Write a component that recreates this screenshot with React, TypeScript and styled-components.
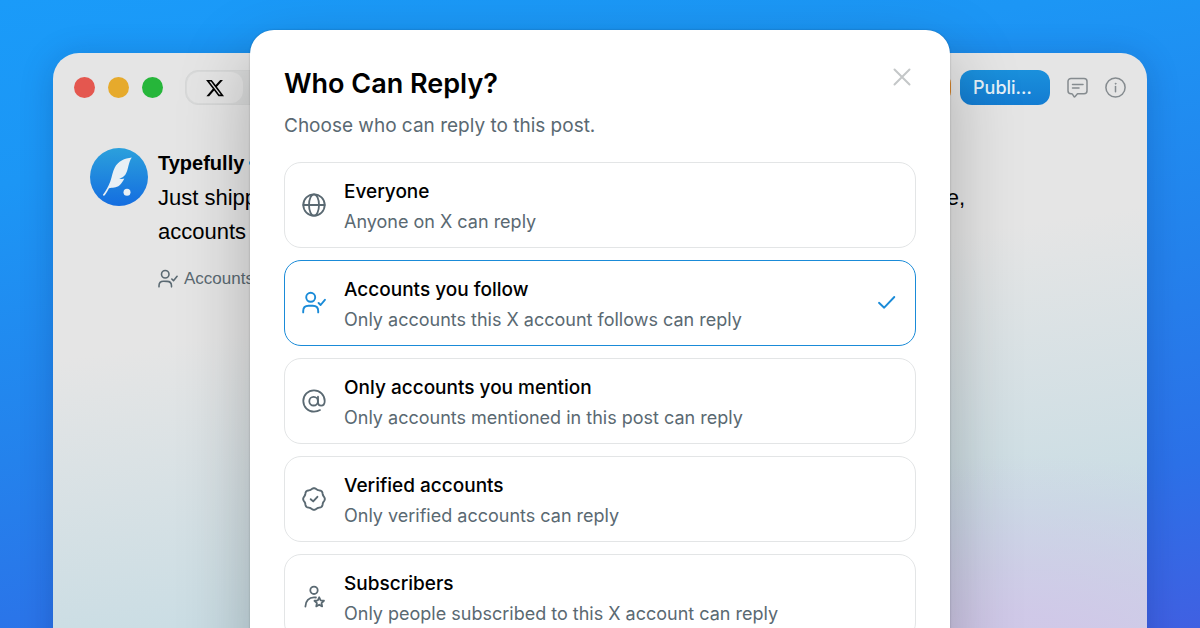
import React, { useState } from "react";
import styled, { createGlobalStyle, css } from "styled-components";

const sans = `Inter, "Liberation Sans", sans-serif`;
const helvetica = `"Liberation Sans", Arial, sans-serif`;
const blue = "#1a8bd8";
const slate = "#5a6972";

const GlobalStyle = createGlobalStyle`
  *, *::before, *::after { box-sizing: border-box; }
  body { margin: 0; font-family: ${sans}; color: #000; }
  button { font: inherit; border: 0; background: none; padding: 0; cursor: pointer; }
  h1, h2, p { margin: 0; }
`;

const Stage = styled.div`
  position: relative;
  height: 100vh;
  overflow: hidden;
  padding: 53px 53px 0;
  background: linear-gradient(170deg, #1a9bf9 0%, #1c96f5 22%, #2482ec 55%, #2c71e8 80%, #4060e2 100%);
`;

const AppWindow = styled.main`
  height: 100%;
  min-height: 700px;
  border-radius: 26px;
  background:
    radial-gradient(ellipse 460px 200px at 88% 86%, rgba(208, 200, 232, 0.95) 20%, rgba(208, 200, 232, 0) 100%),
    linear-gradient(172deg, #e5e5e5 0%, #e5e5e5 36%, #cadde4 70%, #c9d3e6 100%);
  box-shadow: 0 4px 34px rgba(0, 20, 80, 0.2);
`;

const TitleBar = styled.header`
  display: flex;
  align-items: center;
  height: 69px;
  padding: 0 21px;
`;

const Lights = styled.div`
  display: flex;
  gap: 13px;
  margin-right: 22px;
`;

const Light = styled.span<{ $color: string }>`
  width: 21px;
  height: 21px;
  border-radius: 50%;
  background: ${(p) => p.$color};
`;

const Segments = styled.div`
  display: flex;
  height: 35px;
  padding: 1px;
  border: 1px solid #d6d7d7;
  border-radius: 13px;
  background: #d9dada;
`;

const Segment = styled.button<{ $active?: boolean }>`
  display: grid;
  place-items: center;
  width: 56px;
  border-radius: 12px;
  background: ${(p) => (p.$active ? "#e4e4e4" : "transparent")};
`;

const Actions = styled.div`
  display: flex;
  align-items: center;
  gap: 17px;
  margin-left: auto;
`;

const ActionPair = styled.div`
  display: flex;
  align-items: center;
  gap: 9px;
`;

const StreakBadge = styled.span`
  width: 34px;
  height: 25px;
  border-radius: 8px;
  background: #e08a2c;
`;

const PublishButton = styled.button`
  width: 90px;
  height: 35px;
  padding: 0 13px;
  border-radius: 12px;
  text-align: left;
  font-size: 18px;
  font-weight: 500;
  color: #e6f1f8;
  background: linear-gradient(#1a90dc, #137cd2);
`;

const IconButton = styled.button`
  display: grid;
  place-items: center;
  width: 21px;
  height: 21px;
  color: #858b8f;
`;

const Post = styled.article`
  display: flex;
  gap: 10px;
  max-width: 940px;
  padding: 26px 21px 0 37px;
  font-family: ${helvetica};
`;

const PostBody = styled.div`
  flex: 1;
  min-width: 0;
`;

const Author = styled.h2`
  display: flex;
  align-items: center;
  gap: 4px;
  font-size: 20px;
  line-height: 30px;
`;

const PostText = styled.p`
  margin-top: 3px;
  font-size: 22px;
  line-height: 34px;
`;

const ReplyScope = styled.p`
  display: flex;
  align-items: center;
  gap: 6px;
  margin-top: 20px;
  font-size: 17px;
  line-height: 20px;
  color: ${slate};
`;

const Overlay = styled.div`
  position: absolute;
  inset: 0;
  display: flex;
  justify-content: center;
  align-items: flex-start;
  padding: 30px 24px 0;
`;

const Dialog = styled.section`
  width: 100%;
  max-width: 700px;
  padding: 34px;
  border-radius: 24px;
  background: #fff;
  box-shadow: 0 0 2px rgba(0, 0, 0, 0.25), 0 28px 70px rgba(0, 0, 0, 0.25);
`;

const DialogHeader = styled.div`
  display: flex;
  justify-content: space-between;
  align-items: flex-start;
  margin-bottom: 21px;
`;

const Title = styled.h1`
  font-size: 27px;
  font-weight: 600;
  line-height: 40px;
`;

const Subtitle = styled.p`
  margin-top: 7px;
  font-size: 19px;
  line-height: 30px;
  color: ${slate};
`;

const CloseButton = styled.button`
  display: grid;
  place-items: center;
  width: 28px;
  height: 26px;
  color: #c4c7c8;
`;

const Options = styled.fieldset`
  display: grid;
  gap: 12px;
  margin: 0;
  padding: 0;
  border: 0;
`;

const Option = styled.label<{ $selected: boolean }>`
  position: relative;
  display: flex;
  align-items: center;
  gap: 18px;
  height: 86px;
  padding: 0 18px 0 17px;
  border: 1px solid #e3e5e6;
  border-radius: 17px;
  cursor: pointer;
  color: ${slate};
  ${(p) =>
    p.$selected &&
    css`
      border-color: ${blue};
      color: ${blue};
    `}
`;

const Radio = styled.input`
  position: absolute;
  inset: 0;
  margin: 0;
  opacity: 0;
  cursor: pointer;
`;

const OptionText = styled.span`
  flex: 1;
  display: grid;
  padding-top: 3px;
  line-height: 30px;
`;

const OptionName = styled.span`
  font-size: 19px;
  font-weight: 500;
  color: #000;
`;

const OptionHint = styled.span`
  font-size: 18px;
  color: ${slate};
`;

const Svg = styled.svg.attrs({
  fill: "none",
  stroke: "currentColor",
  strokeLinecap: "round",
  strokeLinejoin: "round",
  "aria-hidden": true,
})`
  flex: none;
  display: block;
`;

const GlobeIcon = () => (
  <Svg width="24" height="24" viewBox="0 0 24 24" strokeWidth="1.8">
    <circle cx="12" cy="12" r="10.7" />
    <ellipse cx="12" cy="12" rx="5" ry="10.7" />
    <path d="M1.3 12h21.4" />
  </Svg>
);

const UserCheckIcon = ({ size = 24 }: { size?: number }) => (
  <Svg width={size} height={size} viewBox="0 0 24 24" strokeWidth="1.9">
    <circle cx="8.7" cy="6.3" r="4.500" />
    <path d="M1.2 21.4v-1.400c0-3.200 2.200-5.200 5.400-5.200h4.200c3.200 0 5.400 2 5.400 5.200v1.400M16.600 12l2 2 4.300-5.200" />
  </Svg>
);

const AtIcon = () => (
  <Svg width="24" height="24" viewBox="0 0 24 24" strokeWidth="1.800">
    <circle cx="11.600" cy="12.200" r="4.300" />
    <path d="M16 7.700v5.700c0 2 1.200 3.200 3.100 3.200 2.300 0 3.600-2 3.600-4.700A10.700 10.700 0 1 0 12 22.700c2.300 0 4.300-.5 6-1.600" />
  </Svg>
);

const sealPath = (() => {
  const points = Array.from({ length: 96 }, (_, i) => {
    const a = (i / 96) * Math.PI * 2;
    const r = 10.3 + 0.55 * Math.cos(8 * a);
    return `${(12 + r * Math.cos(a)).toFixed(2)} ${(12 + r * Math.sin(a)).toFixed(2)}`;
  });
  return `M${points.join("L")}Z`;
})();

const VerifiedIcon = () => (
  <Svg width="24" height="24" viewBox="0 0 24 24" strokeWidth="1.900">
    <path d={sealPath} />
    <path d="M8.700 12.200l2.500 2.200 4.200-4.600" />
  </Svg>
);

const starPath = (() => {
  const points = Array.from({ length: 10 }, (_, i) => {
    const a = (i / 10) * Math.PI * 2 - Math.PI / 2;
    const r = i % 2 ? 2.4 : 5;
    return `${(17.2 + r * Math.cos(a)).toFixed(2)} ${(17.3 + r * Math.sin(a)).toFixed(2)}`;
  });
  return `M${points.join("L")}Z`;
})();

const UserStarIcon = () => (
  <Svg width="24" height="24" viewBox="0 0 24 24" strokeWidth="1.800">
    <circle cx="12" cy="5.300" r="3.700" />
    <path d="M3.400 21.500c0-5.400 3.600-9.200 8.600-9.200.7 0 1.300.1 1.900.200" />
    <path d={starPath} />
  </Svg>
);

const CheckIcon = () => (
  <Svg width="20" height="20" viewBox="0 0 20 20" strokeWidth="1.900">
    <path d="M2 9.800l5.200 4.900L17.300 4" />
  </Svg>
);

const CloseIcon = () => (
  <Svg width="18" height="18" viewBox="0 0 18 18" strokeWidth="2">
    <path d="M1.500 1.500l15 15M16.500 1.500l-15 15" />
  </Svg>
);

const CommentIcon = () => (
  <Svg width="21" height="21" viewBox="0 0 21 21" strokeWidth="1.500">
    <path d="M4 1.400h13a3 3 0 0 1 3 3v9.400a3 3 0 0 1-3 3h-6.500l-2.600 2.900a.6.6 0 0 1-.9 0l-1.600-2.500a1 1 0 0 0-.9-.4H4a3 3 0 0 1-3-3V4.400a3 3 0 0 1 3-3zM5.500 7.500h10.500M5.500 11h6.500" />
  </Svg>
);

const InfoIcon = () => (
  <Svg width="21" height="21" viewBox="0 0 21 21" strokeWidth="1.500">
    <circle cx="10.500" cy="10.500" r="9.600" />
    <path d="M10.500 9.500v5.200" />
    <circle cx="10.500" cy="6.700" r=".5" fill="currentColor" strokeWidth=".8" />
  </Svg>
);

const XLogo = () => (
  <svg width="20" height="20" viewBox="0 0 24 24" aria-hidden="true">
    <path d="M18.244 2.250h3.308l-7.227 8.260 8.502 11.240H16.170l-5.214-6.817L4.990 21.750H1.680l7.730-8.835L1.254 2.250H8.080l4.713 6.231zm-1.161 17.520h1.833L7.084 4.126H5.117z" />
  </svg>
);

const Avatar = styled.svg`
  flex: none;
  width: 58px;
  height: 58px;
`;

const FeatherAvatar = () => (
  <Avatar viewBox="0 0 58 58" role="img" aria-label="Typefully">
    <defs>
      <linearGradient id="sky" x1="0" y1="0" x2="0" y2="1">
        <stop offset="0" stopColor="#2ba0dc" />
        <stop offset="1" stopColor="#146de0" />
      </linearGradient>
    </defs>
    <circle cx="29" cy="29" r="29" fill="url(#sky)" />
    <path
      fill="#e9f0f5"
      d="M41.800 9.600C34.500 10.300 28 13.500 24.800 19.500c-2.200 4.200-2.800 9.300-4.600 14.300-1.800 4.800-4.500 9.200-7.400 13.300.5.8 1.400.9 2 .2 1.700-2.400 3-4.800 4.200-7.100 3.300-.6 7.300-.2 10.600-2.900 1.700-1.500 3.500-4 4.700-6.700-1.700.5-3.400.5-5.200-.1 2.600-.6 4.800-1.700 6.200-3.700 3.300-5 2.700-12 6.500-17.200z"
    />
    <circle cx="37" cy="44.300" r="3.500" fill="#e9f0f5" />
  </Avatar>
);

const BadgeIcon = () => (
  <Svg width="22" height="22" viewBox="0 0 24 24" strokeWidth="2">
    <path d={sealPath} fill="#1d9bf0" stroke="none" />
    <path d="M8 12.300l3 2.800 5-5.600" stroke="#fff" />
  </Svg>
);

const options = [
  { id: "everyone", name: "Everyone", hint: "Anyone on X can reply", icon: <GlobeIcon /> },
  { id: "following", name: "Accounts you follow", hint: "Only accounts this X account follows can reply", icon: <UserCheckIcon /> },
  { id: "mentioned", name: "Only accounts you mention", hint: "Only accounts mentioned in this post can reply", icon: <AtIcon /> },
  { id: "verified", name: "Verified accounts", hint: "Only verified accounts can reply", icon: <VerifiedIcon /> },
  { id: "subscribers", name: "Subscribers", hint: "Only people subscribed to this X account can reply", icon: <UserStarIcon /> },
];

export default function App() {
  const [selected, setSelected] = useState("following");

  return (
    <>
      <GlobalStyle />
      <Stage>
        <AppWindow>
          <TitleBar>
            <Lights>
              <Light $color="#e4574f" />
              <Light $color="#e6aa2c" />
              <Light $color="#26b63a" />
            </Lights>
            <Segments>
              <Segment $active aria-label="X">
                <XLogo />
              </Segment>
              <Segment aria-label="Add platform" />
            </Segments>
            <Actions>
              <ActionPair>
                <StreakBadge />
                <PublishButton>Publi…</PublishButton>
              </ActionPair>
              <IconButton aria-label="Comments">
                <CommentIcon />
              </IconButton>
              <IconButton aria-label="Info">
                <InfoIcon />
              </IconButton>
            </Actions>
          </TitleBar>
          <Post>
            <FeatherAvatar />
            <PostBody>
              <Author>
                Typefully <BadgeIcon />
              </Author>
              <PostText>
                Just shipped: you can now choose who may reply to all your posts on X. Everyone, accounts you follow,
                or only the people you mention.
              </PostText>
              <ReplyScope>
                <UserCheckIcon size={20} /> Accounts you follow can reply
              </ReplyScope>
            </PostBody>
          </Post>
        </AppWindow>
        <Overlay>
          <Dialog role="dialog" aria-modal="true" aria-labelledby="reply-title">
            <DialogHeader>
              <div>
                <Title id="reply-title">Who Can Reply?</Title>
                <Subtitle>Choose who can reply to this post.</Subtitle>
              </div>
              <CloseButton aria-label="Close">
                <CloseIcon />
              </CloseButton>
            </DialogHeader>
            <Options aria-labelledby="reply-title">
              {options.map((o) => (
                <Option key={o.id} $selected={o.id === selected}>
                  <Radio
                    type="radio"
                    name="reply"
                    value={o.id}
                    checked={o.id === selected}
                    onChange={() => setSelected(o.id)}
                  />
                  {o.icon}
                  <OptionText>
                    <OptionName>{o.name}</OptionName>
                    <OptionHint>{o.hint}</OptionHint>
                  </OptionText>
                  {o.id === selected && <CheckIcon />}
                </Option>
              ))}
            </Options>
          </Dialog>
        </Overlay>
      </Stage>
    </>
  );
}
